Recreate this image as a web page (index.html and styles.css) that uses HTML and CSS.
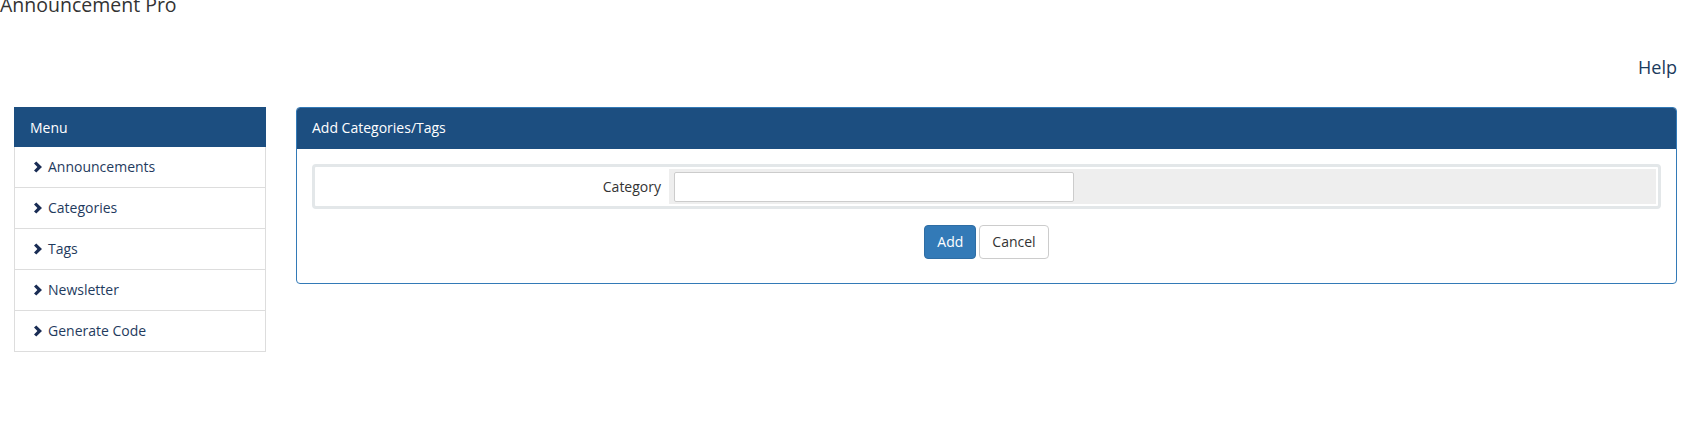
FILE: index.html
```html
<!DOCTYPE html>
<html lang="en">
<head>
<meta charset="utf-8">
<title>Announcement Pro</title>
<link rel="stylesheet" href="styles.css">
</head>
<body>
<div class="title">Announcement Pro</div>
<div class="help-row"><a class="help" href="#">Help</a></div>
<div class="main">
  <div class="menu">
    <div class="menu-head">Menu</div>
    <a class="menu-item" href="#"><svg class="chev" viewBox="0 0 10 12" width="10" height="12"><path d="M1 2.6 L3.3 0.4 L9 6 L3.3 11.6 L1 9.4 L4.4 6 Z"/></svg>Announcements</a>
    <a class="menu-item" href="#"><svg class="chev" viewBox="0 0 10 12" width="10" height="12"><path d="M1 2.6 L3.3 0.4 L9 6 L3.3 11.6 L1 9.4 L4.4 6 Z"/></svg>Categories</a>
    <a class="menu-item" href="#"><svg class="chev" viewBox="0 0 10 12" width="10" height="12"><path d="M1 2.6 L3.3 0.4 L9 6 L3.3 11.6 L1 9.4 L4.4 6 Z"/></svg>Tags</a>
    <a class="menu-item" href="#"><svg class="chev" viewBox="0 0 10 12" width="10" height="12"><path d="M1 2.6 L3.3 0.4 L9 6 L3.3 11.6 L1 9.4 L4.4 6 Z"/></svg>Newsletter</a>
    <a class="menu-item" href="#"><svg class="chev" viewBox="0 0 10 12" width="10" height="12"><path d="M1 2.6 L3.3 0.4 L9 6 L3.3 11.6 L1 9.4 L4.4 6 Z"/></svg>Generate Code</a>
  </div>
  <div class="panel">
    <div class="panel-head">Add Categories/Tags</div>
    <div class="panel-body">
      <div class="well">
        <div class="label-cell">Category</div>
        <div class="input-cell"><input class="field" type="text"></div>
      </div>
      <div class="actions">
        <button class="btn btn-primary" type="button">Add</button>
        <button class="btn btn-default" type="button">Cancel</button>
      </div>
    </div>
  </div>
</div>
</body>
</html>
```

FILE: styles.css
```css
* { box-sizing: border-box; }
body {
  margin: 0;
  font-family: "Open Sans", "DejaVu Sans", sans-serif;
  font-size: 14px;
  color: #333;
  background: #fff;
}
.title {
  font-size: 19.5px;
  line-height: 20px;
  margin-top: -5px;
  color: #333;
}
.help-row {
  margin-top: 40px;
  text-align: right;
  padding-right: 7px;
  line-height: 24px;
}
.help {
  font-size: 18px;
  color: #1a3b5d;
  text-decoration: none;
}
.main {
  display: flex;
  align-items: flex-start;
  gap: 30px;
  margin-top: 26px;
  padding: 0 7px 0 14px;
}
.menu {
  width: 252px;
  flex: none;
  display: flex;
  flex-direction: column;
}
.menu-head {
  background: #1c4e80;
  color: #fff;
  padding: 10px 15px;
  line-height: 20px;
  border: 1px solid #1c4e80;
  border-bottom: 0;
  height: 40px;
}
.menu-item {
  display: flex;
  align-items: center;
  padding: 10px 15px;
  line-height: 20px;
  border: 1px solid #ddd;
  border-top: 0;
  color: #1f3b5e;
  text-decoration: none;
}
.chev {
  fill: #1a2d55;
  margin-left: 3px;
  margin-right: 5px;
  flex: none;
}
.panel {
  flex: 1;
  border: 1px solid #337ab7;
  border-radius: 4px;
  overflow: hidden;
}
.panel-head {
  background: #1c4e80;
  color: #fff;
  padding: 10px 15px;
  line-height: 20px;
  border-bottom: 1px solid #1c4e80;
}
.panel-body {
  padding: 15px 15px 24px;
}
.well {
  border: 3px solid #e3e7e9;
  border-radius: 4px;
  padding: 2px;
  display: grid;
  grid-template-columns: 350px 1fr;
  column-gap: 2px;
}
.label-cell {
  text-align: right;
  padding-right: 6px;
  display: flex;
  align-items: center;
  justify-content: flex-end;
}
.input-cell {
  background: #eee;
  padding: 3px 5px 2px;
}
.field {
  display: block;
  width: 400px;
  height: 30px;
  border: 1px solid #ccc;
  border-radius: 2px;
  background: #fff;
  font-family: inherit;
  font-size: 14px;
  padding: 4px 8px;
}
.actions {
  display: flex;
  justify-content: center;
  gap: 3px;
  margin-top: 16px;
}
.btn {
  font-family: inherit;
  font-size: 14px;
  line-height: 20px;
  padding: 6px 12px;
  border-radius: 4px;
  border: 1px solid #ccc;
  height: 34px;
}
.btn-primary {
  background: #337ab7;
  border-color: #2e6da4;
  color: #fff;
}
.btn-default {
  background: #fff;
  color: #333;
}
```
